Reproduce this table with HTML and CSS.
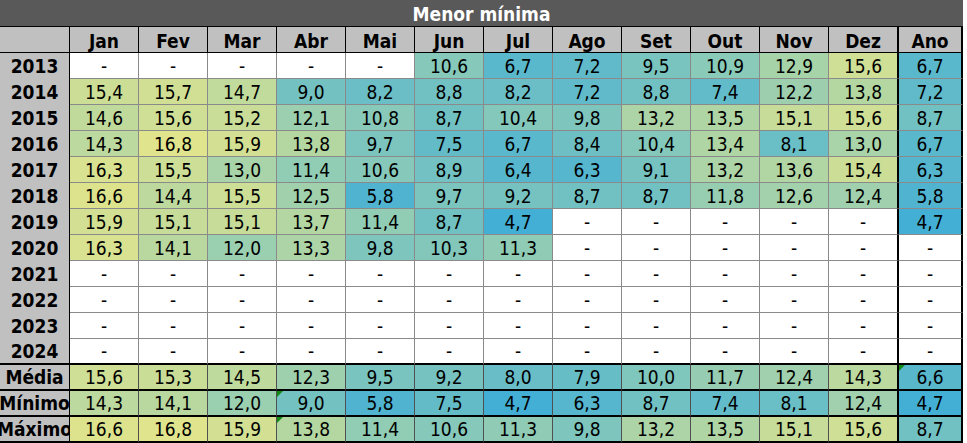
FILE: index.html
```html
<!DOCTYPE html>
<html lang="pt">
<head>
<meta charset="utf-8">
<title>Menor mínima</title>
<link rel="stylesheet" href="styles.css">
</head>
<body>
<div class="sheet">
  <div class="title">Menor mínima</div>

  <div class="yr hdr"></div>
  <div class="hd">Jan</div><div class="hd">Fev</div><div class="hd">Mar</div><div class="hd">Abr</div><div class="hd">Mai</div><div class="hd">Jun</div><div class="hd">Jul</div><div class="hd">Ago</div><div class="hd">Set</div><div class="hd">Out</div><div class="hd">Nov</div><div class="hd dez">Dez</div><div class="hd ano">Ano</div>

  <div class="yr">2013</div>
  <div class="c">-</div><div class="c">-</div><div class="c">-</div><div class="c">-</div><div class="c">-</div><div class="c">10,6</div><div class="c">6,7</div><div class="c">7,2</div><div class="c">9,5</div><div class="c">10,9</div><div class="c">12,9</div><div class="c dez">15,6</div><div class="c ano">6,7</div>

  <div class="yr">2014</div>
  <div class="c">15,4</div><div class="c">15,7</div><div class="c">14,7</div><div class="c">9,0</div><div class="c">8,2</div><div class="c">8,8</div><div class="c">8,2</div><div class="c">7,2</div><div class="c">8,8</div><div class="c">7,4</div><div class="c">12,2</div><div class="c dez">13,8</div><div class="c ano">7,2</div>

  <div class="yr">2015</div>
  <div class="c">14,6</div><div class="c">15,6</div><div class="c">15,2</div><div class="c">12,1</div><div class="c">10,8</div><div class="c">8,7</div><div class="c">10,4</div><div class="c">9,8</div><div class="c">13,2</div><div class="c">13,5</div><div class="c">15,1</div><div class="c dez">15,6</div><div class="c ano">8,7</div>

  <div class="yr">2016</div>
  <div class="c">14,3</div><div class="c">16,8</div><div class="c">15,9</div><div class="c">13,8</div><div class="c">9,7</div><div class="c">7,5</div><div class="c">6,7</div><div class="c">8,4</div><div class="c">10,4</div><div class="c">13,4</div><div class="c">8,1</div><div class="c dez">13,0</div><div class="c ano">6,7</div>

  <div class="yr">2017</div>
  <div class="c">16,3</div><div class="c">15,5</div><div class="c">13,0</div><div class="c">11,4</div><div class="c">10,6</div><div class="c">8,9</div><div class="c">6,4</div><div class="c">6,3</div><div class="c">9,1</div><div class="c">13,2</div><div class="c">13,6</div><div class="c dez">15,4</div><div class="c ano">6,3</div>

  <div class="yr">2018</div>
  <div class="c">16,6</div><div class="c">14,4</div><div class="c">15,5</div><div class="c">12,5</div><div class="c">5,8</div><div class="c">9,7</div><div class="c">9,2</div><div class="c">8,7</div><div class="c">8,7</div><div class="c">11,8</div><div class="c">12,6</div><div class="c dez">12,4</div><div class="c ano">5,8</div>

  <div class="yr">2019</div>
  <div class="c">15,9</div><div class="c">15,1</div><div class="c">15,1</div><div class="c">13,7</div><div class="c">11,4</div><div class="c">8,7</div><div class="c">4,7</div><div class="c">-</div><div class="c">-</div><div class="c">-</div><div class="c">-</div><div class="c dez">-</div><div class="c ano">4,7</div>

  <div class="yr">2020</div>
  <div class="c">16,3</div><div class="c">14,1</div><div class="c">12,0</div><div class="c">13,3</div><div class="c">9,8</div><div class="c">10,3</div><div class="c">11,3</div><div class="c">-</div><div class="c">-</div><div class="c">-</div><div class="c">-</div><div class="c dez">-</div><div class="c ano">-</div>

  <div class="yr">2021</div>
  <div class="c">-</div><div class="c">-</div><div class="c">-</div><div class="c">-</div><div class="c">-</div><div class="c">-</div><div class="c">-</div><div class="c">-</div><div class="c">-</div><div class="c">-</div><div class="c">-</div><div class="c dez">-</div><div class="c ano">-</div>

  <div class="yr">2022</div>
  <div class="c">-</div><div class="c">-</div><div class="c">-</div><div class="c">-</div><div class="c">-</div><div class="c">-</div><div class="c">-</div><div class="c">-</div><div class="c">-</div><div class="c">-</div><div class="c">-</div><div class="c dez">-</div><div class="c ano">-</div>

  <div class="yr">2023</div>
  <div class="c">-</div><div class="c">-</div><div class="c">-</div><div class="c">-</div><div class="c">-</div><div class="c">-</div><div class="c">-</div><div class="c">-</div><div class="c">-</div><div class="c">-</div><div class="c">-</div><div class="c dez">-</div><div class="c ano">-</div>

  <div class="yr last">2024</div>
  <div class="c last">-</div><div class="c last">-</div><div class="c last">-</div><div class="c last">-</div><div class="c last">-</div><div class="c last">-</div><div class="c last">-</div><div class="c last">-</div><div class="c last">-</div><div class="c last">-</div><div class="c last">-</div><div class="c last dez">-</div><div class="c last ano">-</div>

  <div class="yr sum">Média</div>
  <div class="c sum">15,6</div><div class="c sum">15,3</div><div class="c sum">14,5</div><div class="c sum">12,3</div><div class="c sum">9,5</div><div class="c sum">9,2</div><div class="c sum">8,0</div><div class="c sum">7,9</div><div class="c sum">10,0</div><div class="c sum">11,7</div><div class="c sum">12,4</div><div class="c sum dez">14,3</div><div class="c sum ano flag">6,6</div>

  <div class="yr sum">Mínimo</div>
  <div class="c sum">14,3</div><div class="c sum">14,1</div><div class="c sum">12,0</div><div class="c sum flag">9,0</div><div class="c sum">5,8</div><div class="c sum">7,5</div><div class="c sum">4,7</div><div class="c sum">6,3</div><div class="c sum">8,7</div><div class="c sum">7,4</div><div class="c sum">8,1</div><div class="c sum dez">12,4</div><div class="c sum ano">4,7</div>

  <div class="yr sum">Máximo</div>
  <div class="c sum">16,6</div><div class="c sum">16,8</div><div class="c sum">15,9</div><div class="c sum flag">13,8</div><div class="c sum">11,4</div><div class="c sum">10,6</div><div class="c sum">11,3</div><div class="c sum">9,8</div><div class="c sum">13,2</div><div class="c sum">13,5</div><div class="c sum">15,1</div><div class="c sum dez">15,6</div><div class="c sum ano">8,7</div>
</div>
<script src="script.js"></script>
</body>
</html>
```

FILE: styles.css
```css
html, body {
  margin: 0;
  padding: 0;
  background: #ffffff;
}

.sheet {
  display: grid;
  grid-template-columns: 70px repeat(12, 69px) 65px;
  grid-template-rows: 27px 26px repeat(15, 26px);
  width: 963px;
  font-family: "DejaVu Sans Condensed", "DejaVu Sans", sans-serif;
  font-size: 19px;
  color: #000;
}

.sheet > div {
  box-sizing: border-box;
  display: flex;
  align-items: center;
  justify-content: center;
  white-space: nowrap;
  overflow: hidden;
}

.title {
  grid-column: 1 / -1;
  background: #595959;
  color: #ffffff;
  font-weight: bold;
  border-bottom: 1px solid #000;
  padding-top: 1px;
}

.hd {
  background: #c0c0c0;
  font-weight: bold;
  border-right: 1px solid #000;
  border-bottom: 1px solid #000;
  padding-top: 2px;
}

.yr {
  background: #c0c0c0;
  font-weight: bold;
  border-right: 1px solid #000;
}

.yr.hdr {
  border-bottom: 1px solid #000;
}

.c {
  background: #ffffff;
  border-right: 1px solid #8a8a8a;
  border-bottom: 1px solid #8a8a8a;
  position: relative;
}

.c.dez,
.hd.dez {
  border-right: 1px solid #000;
}

.c.ano,
.hd.ano {
  border-left: 1px solid #000;
  border-right: 2px solid #000;
}

.last,
.sum {
  border-bottom: 2px solid #000 !important;
}

.c.sum {
  border-right-color: #505050;
}

.c.sum.dez {
  border-right-color: #000;
}

.c.sum.ano {
  border-right-color: #000;
}

.flag::before {
  content: "";
  position: absolute;
  left: 0;
  top: 0;
  width: 0;
  height: 0;
  border-top: 6px solid #138a13;
  border-right: 6px solid transparent;
}
```

FILE: script.js
```js
(function () {
  var stops = [
    [4.7, [67, 175, 213]],
    [10.75, [136, 201, 185]],
    [16.8, [224, 228, 140]]
  ];
  function color(v) {
    var a, b;
    if (v <= stops[1][0]) { a = stops[0]; b = stops[1]; }
    else { a = stops[1]; b = stops[2]; }
    var t = (v - a[0]) / (b[0] - a[0]);
    t = Math.max(0, Math.min(1, t));
    var c = a[1].map(function (x, i) { return Math.round(x + (b[1][i] - x) * t); });
    return "rgb(" + c.join(",") + ")";
  }
  var cells = document.querySelectorAll(".c");
  for (var i = 0; i < cells.length; i++) {
    var v = parseFloat(cells[i].textContent.replace(",", "."));
    if (!isNaN(v)) cells[i].style.backgroundColor = color(v);
  }
})();
```
